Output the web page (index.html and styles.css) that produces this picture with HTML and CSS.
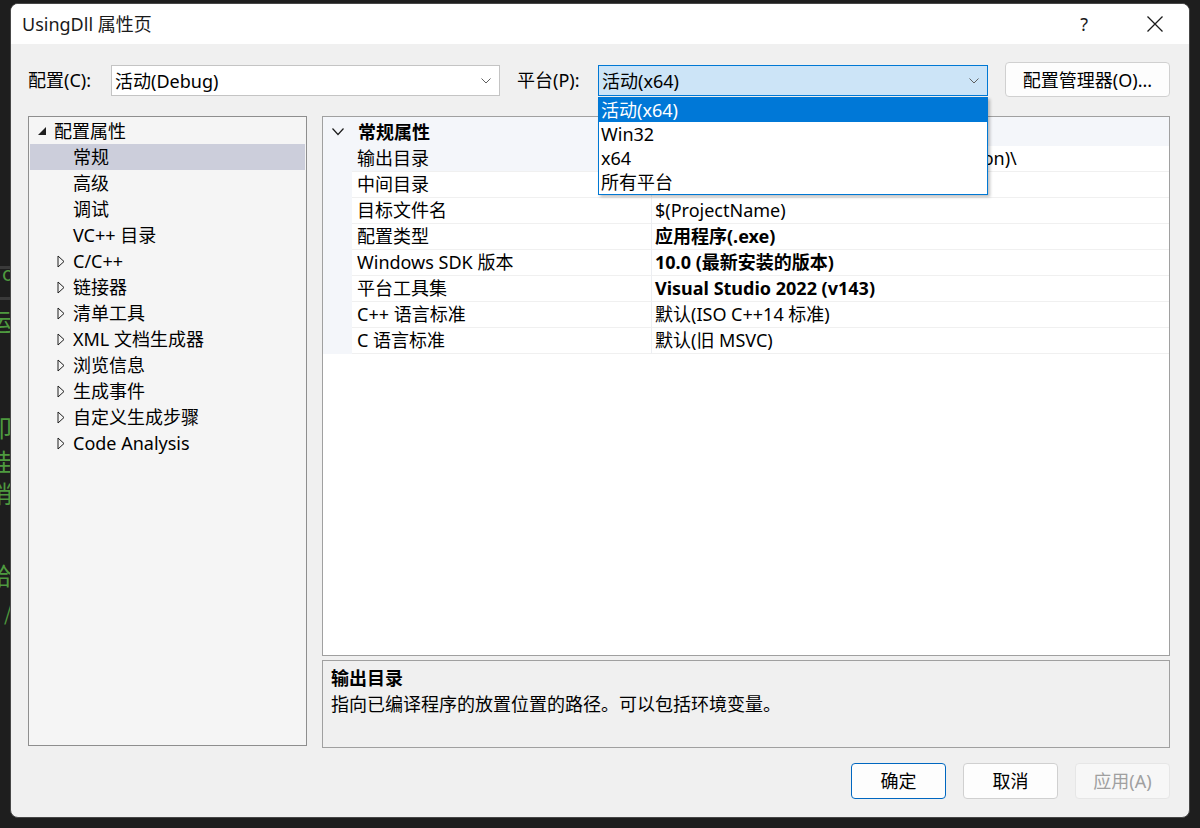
FILE: index.html
```html
<!DOCTYPE html>
<html lang="zh-CN">
<head>
    <meta charset="UTF-8">
    <title>UsingDll 属性页</title>
    <link rel="stylesheet" href="styles.css">
</head>
<body>
    <!-- editor behind the dialog, only a sliver shows on the left -->
    <div class="backdrop">
        <div class="bg-bar bar-1"></div>
        <div class="bg-bar bar-2"></div>
        <span class="bg-char c1">o</span>
        <span class="bg-char c2">运</span>
        <span class="bg-char c3">印</span>
        <span class="bg-char c4">挂</span>
        <span class="bg-char c5">稍</span>
        <span class="bg-char c6">给</span>
        <span class="bg-char c7">/</span>
    </div>

    <div class="dialog">
        <div class="titlebar">
            <span class="title">UsingDll 属性页</span>
            <div class="title-buttons">
                <span class="help">?</span>
                <svg class="close" width="18" height="16" viewBox="0 0 18 16">
                    <path d="M1.5 0.5 L16.5 15.5 M16.5 0.5 L1.5 15.5" stroke="#1a1a1a" stroke-width="1.3" fill="none"/>
                </svg>
            </div>
        </div>

        <div class="content">
            <div class="config-row">
                <span class="field-label config-label">配置(C):</span>
                <div class="combo combo-config">
                    <span class="combo-text">活动(Debug)</span>
                    <svg class="chevron" width="10" height="6" viewBox="0 0 10 6"><path d="M0.5 0.5 L5 5 L9.5 0.5" stroke="#5f5f5f" fill="none"/></svg>
                </div>
                <span class="field-label platform-label">平台(P):</span>
                <div class="combo combo-platform">
                    <span class="combo-text">活动(x64)</span>
                    <svg class="chevron" width="10" height="6" viewBox="0 0 10 6"><path d="M0.5 0.5 L5 5 L9.5 0.5" stroke="#5f5f5f" fill="none"/></svg>
                    <ul class="dropdown">
                        <li class="selected">活动(x64)</li>
                        <li>Win32</li>
                        <li>x64</li>
                        <li>所有平台</li>
                    </ul>
                </div>
                <button class="btn btn-manager">配置管理器(O)...</button>
            </div>

            <div class="main">
                <div class="tree">
                    <div class="tree-row level-0">
                        <svg class="expander" width="10" height="10" viewBox="0 0 10 10"><polygon points="9,1 9,9 1,9" fill="#1e1e1e"/></svg>
                        <span>配置属性</span>
                    </div>
                    <div class="tree-row level-1 selected"><span>常规</span></div>
                    <div class="tree-row level-1"><span>高级</span></div>
                    <div class="tree-row level-1"><span>调试</span></div>
                    <div class="tree-row level-1"><span>VC++ 目录</span></div>
                    <div class="tree-row level-1 has-children">
                        <svg class="expander" width="8" height="13" viewBox="0 0 8 13"><polygon points="1,1 7,6.5 1,12" fill="none" stroke="#1e1e1e"/></svg>
                        <span>C/C++</span>
                    </div>
                    <div class="tree-row level-1 has-children">
                        <svg class="expander" width="8" height="13" viewBox="0 0 8 13"><polygon points="1,1 7,6.5 1,12" fill="none" stroke="#1e1e1e"/></svg>
                        <span>链接器</span>
                    </div>
                    <div class="tree-row level-1 has-children">
                        <svg class="expander" width="8" height="13" viewBox="0 0 8 13"><polygon points="1,1 7,6.5 1,12" fill="none" stroke="#1e1e1e"/></svg>
                        <span>清单工具</span>
                    </div>
                    <div class="tree-row level-1 has-children">
                        <svg class="expander" width="8" height="13" viewBox="0 0 8 13"><polygon points="1,1 7,6.5 1,12" fill="none" stroke="#1e1e1e"/></svg>
                        <span>XML 文档生成器</span>
                    </div>
                    <div class="tree-row level-1 has-children">
                        <svg class="expander" width="8" height="13" viewBox="0 0 8 13"><polygon points="1,1 7,6.5 1,12" fill="none" stroke="#1e1e1e"/></svg>
                        <span>浏览信息</span>
                    </div>
                    <div class="tree-row level-1 has-children">
                        <svg class="expander" width="8" height="13" viewBox="0 0 8 13"><polygon points="1,1 7,6.5 1,12" fill="none" stroke="#1e1e1e"/></svg>
                        <span>生成事件</span>
                    </div>
                    <div class="tree-row level-1 has-children">
                        <svg class="expander" width="8" height="13" viewBox="0 0 8 13"><polygon points="1,1 7,6.5 1,12" fill="none" stroke="#1e1e1e"/></svg>
                        <span>自定义生成步骤</span>
                    </div>
                    <div class="tree-row level-1 has-children">
                        <svg class="expander" width="8" height="13" viewBox="0 0 8 13"><polygon points="1,1 7,6.5 1,12" fill="none" stroke="#1e1e1e"/></svg>
                        <span>Code Analysis</span>
                    </div>
                </div>

                <div class="right">
                    <div class="grid">
                        <div class="grid-row category">
                            <div class="gutter">
                                <svg width="12" height="8" viewBox="0 0 12 8"><path d="M0.5 0.5 L6 6.5 L11.5 0.5" stroke="#1e1e1e" stroke-width="1.2" fill="none"/></svg>
                            </div>
                            <div class="cat-name">常规属性</div>
                        </div>
                        <div class="grid-row current">
                            <div class="gutter"></div>
                            <div class="name">输出目录</div>
                            <div class="value">$(SolutionDir)$(Platform)\$(Configuration)\</div>
                        </div>
                        <div class="grid-row">
                            <div class="gutter"></div>
                            <div class="name">中间目录</div>
                            <div class="value">$(Platform)\$(Configuration)\</div>
                        </div>
                        <div class="grid-row">
                            <div class="gutter"></div>
                            <div class="name">目标文件名</div>
                            <div class="value">$(ProjectName)</div>
                        </div>
                        <div class="grid-row">
                            <div class="gutter"></div>
                            <div class="name">配置类型</div>
                            <div class="value bold">应用程序(.exe)</div>
                        </div>
                        <div class="grid-row">
                            <div class="gutter"></div>
                            <div class="name">Windows SDK 版本</div>
                            <div class="value bold">10.0 (最新安装的版本)</div>
                        </div>
                        <div class="grid-row">
                            <div class="gutter"></div>
                            <div class="name">平台工具集</div>
                            <div class="value bold">Visual Studio 2022 (v143)</div>
                        </div>
                        <div class="grid-row">
                            <div class="gutter"></div>
                            <div class="name">C++ 语言标准</div>
                            <div class="value">默认(ISO C++14 标准)</div>
                        </div>
                        <div class="grid-row">
                            <div class="gutter"></div>
                            <div class="name">C 语言标准</div>
                            <div class="value">默认(旧 MSVC)</div>
                        </div>
                    </div>
                    <div class="desc">
                        <div class="desc-title">输出目录</div>
                        <div class="desc-text">指向已编译程序的放置位置的路径。可以包括环境变量。</div>
                    </div>
                </div>
            </div>

            <div class="footer">
                <button class="btn btn-ok">确定</button>
                <button class="btn">取消</button>
                <button class="btn btn-disabled">应用(A)</button>
            </div>
        </div>
    </div>
</body>
</html>
```

FILE: styles.css
```css
body {
    margin: 0;
    width: 1200px;
    height: 828px;
    overflow: hidden;
    position: relative;
    background-color: #1e1e1e;
    font-family: "Noto Sans", "Noto Sans CJK SC", sans-serif;
    font-size: 18px;
    color: #000;
}

/* editor behind */
.backdrop {
    position: absolute;
    left: 0;
    top: 0;
    width: 40px;
    height: 828px;
}
.bg-bar {
    position: absolute;
    left: 0;
    width: 40px;
    height: 3px;
    background-color: #3a3a3a;
}
.bar-1 { top: 266px; }
.bar-2 { top: 297px; }
.bg-char {
    position: absolute;
    font-family: "Noto Sans CJK SC", sans-serif;
    font-size: 24px;
    line-height: 30px;
    color: #4e9a3f;
}
.c1 { top: 258px; left: 2px; font-size: 20px; }
.c2 { top: 306px; left: -12px; }
.c3 { top: 412px; left: -12px; }
.c4 { top: 446px; left: -12px; }
.c5 { top: 478px; left: -12px; }
.c6 { top: 560px; left: -12px; }
.c7 { top: 598px; left: 4px; font-size: 20px; }

/* dialog window */
.dialog {
    position: relative;
    z-index: 1;
    box-sizing: border-box;
    margin: 3px 0 0 10px;
    width: 1180px;
    height: 815px;
    border: 1px solid #474747;
    border-radius: 8px;
    background-color: #f0f0f0;
    overflow: hidden;
    display: flex;
    flex-direction: column;
}
.titlebar {
    height: 40px;
    background-color: #fff;
    display: flex;
    align-items: center;
    justify-content: space-between;
    padding-left: 11px;
}
.title {
    font-size: 18px;
    line-height: 24px;
    color: #1a1a1a;
}
.title-buttons {
    display: flex;
    align-items: center;
}
.help {
    font-size: 18px;
    line-height: 24px;
    color: #1a1a1a;
    margin-right: 58px;
}
.close {
    margin-right: 25px;
}

.content {
    flex: 1;
    padding: 18px 19px 0 17px;
}

/* top row */
.config-row {
    display: flex;
    align-items: center;
    height: 35px;
}
.field-label {
    line-height: 24px;
}
.config-label { width: 83px; }
.platform-label { width: 81px; margin-left: 17px; }
.combo {
    position: relative;
    box-sizing: border-box;
    height: 31px;
    border: 1px solid #c4c4c4;
    background-color: #fff;
    display: flex;
    align-items: center;
    justify-content: space-between;
    padding: 0 8px 0 3px;
    margin-top: 2px;
}
.combo-config { width: 389px; }
.combo-platform {
    width: 390px;
    background-color: #cce4f7;
    border-color: #0078d4;
    padding-left: 3px;
}
.combo-text { line-height: 24px; }
.dropdown {
    position: absolute;
    left: -1px;
    top: 31px;
    width: 390px;
    box-sizing: border-box;
    margin: 0;
    padding: 0;
    list-style: none;
    background-color: #fff;
    border: 1px solid #0078d4;
    box-shadow: 2px 2px 3px rgba(0, 0, 0, 0.25);
    z-index: 5;
}
.dropdown li {
    height: 24px;
    line-height: 24px;
    padding-left: 2px;
}
.dropdown li.selected {
    background-color: #0078d7;
    color: #fff;
}

.btn {
    box-sizing: border-box;
    font-family: "Noto Sans", "Noto Sans CJK SC", sans-serif;
    font-size: 18px;
    color: #000;
    background-color: #fdfdfd;
    border: 1px solid #d0d0d0;
    border-radius: 4px;
    padding: 0;
    line-height: 24px;
}
.btn-manager {
    width: 165px;
    height: 35px;
    margin-left: 17px;
}

/* main area */
.main {
    display: flex;
    gap: 15px;
    margin-top: 19px;
}
.tree {
    box-sizing: border-box;
    width: 279px;
    height: 630px;
    border: 1px solid #8e8e8e;
    background-color: #f5f5f5;
    padding: 1px 1px 0 1px;
}
.tree-row {
    position: relative;
    height: 26px;
    line-height: 26px;
    white-space: nowrap;
}
.tree-row.level-0 { padding-left: 24px; }
.tree-row.level-1 { padding-left: 43px; }
.tree-row.selected { background-color: #cccedb; }
.tree-row .expander {
    position: absolute;
}
.level-0 .expander { left: 7px; top: 8px; }
.level-1 .expander { left: 27px; top: 7px; }

.right {
    width: 848px;
    display: flex;
    flex-direction: column;
    gap: 4px;
}
.grid {
    box-sizing: border-box;
    height: 540px;
    border: 1px solid #a0a0a0;
    background-color: #fff;
}
.grid-row {
    display: grid;
    grid-template-columns: 29px 299px 1fr;
    height: 26px;
    line-height: 25px;
    white-space: nowrap;
}
.grid-row.category {
    height: 29px;
    line-height: 30px;
    background-color: #f4f6fa;
}
.gutter {
    background-color: #f4f6fa;
    display: flex;
    align-items: center;
    justify-content: center;
}
.cat-name {
    font-weight: bold;
    padding-left: 6px;
}
.name {
    padding-left: 5px;
    border-bottom: 1px solid #f0f0f0;
}
.current .name { background-color: #f4f6fa; }
.value {
    padding-left: 3px;
    border-left: 1px solid #eceef2;
    border-bottom: 1px solid #f0f0f0;
    overflow: hidden;
}
.value.bold { font-weight: bold; }

.desc {
    box-sizing: border-box;
    height: 88px;
    border: 1px solid #a0a0a0;
    padding: 4px 8px;
}
.desc-title {
    font-weight: bold;
    line-height: 26px;
}
.desc-text {
    line-height: 26px;
}

/* bottom buttons */
.footer {
    display: flex;
    justify-content: flex-end;
    gap: 17px;
    margin-top: 15px;
}
.footer .btn {
    width: 95px;
    height: 36px;
}
.btn-ok { border-color: #0067c0; }
.btn-disabled {
    color: #a0a0a0;
    background-color: #f7f7f7;
    border-color: #e6e6e6;
}
```
